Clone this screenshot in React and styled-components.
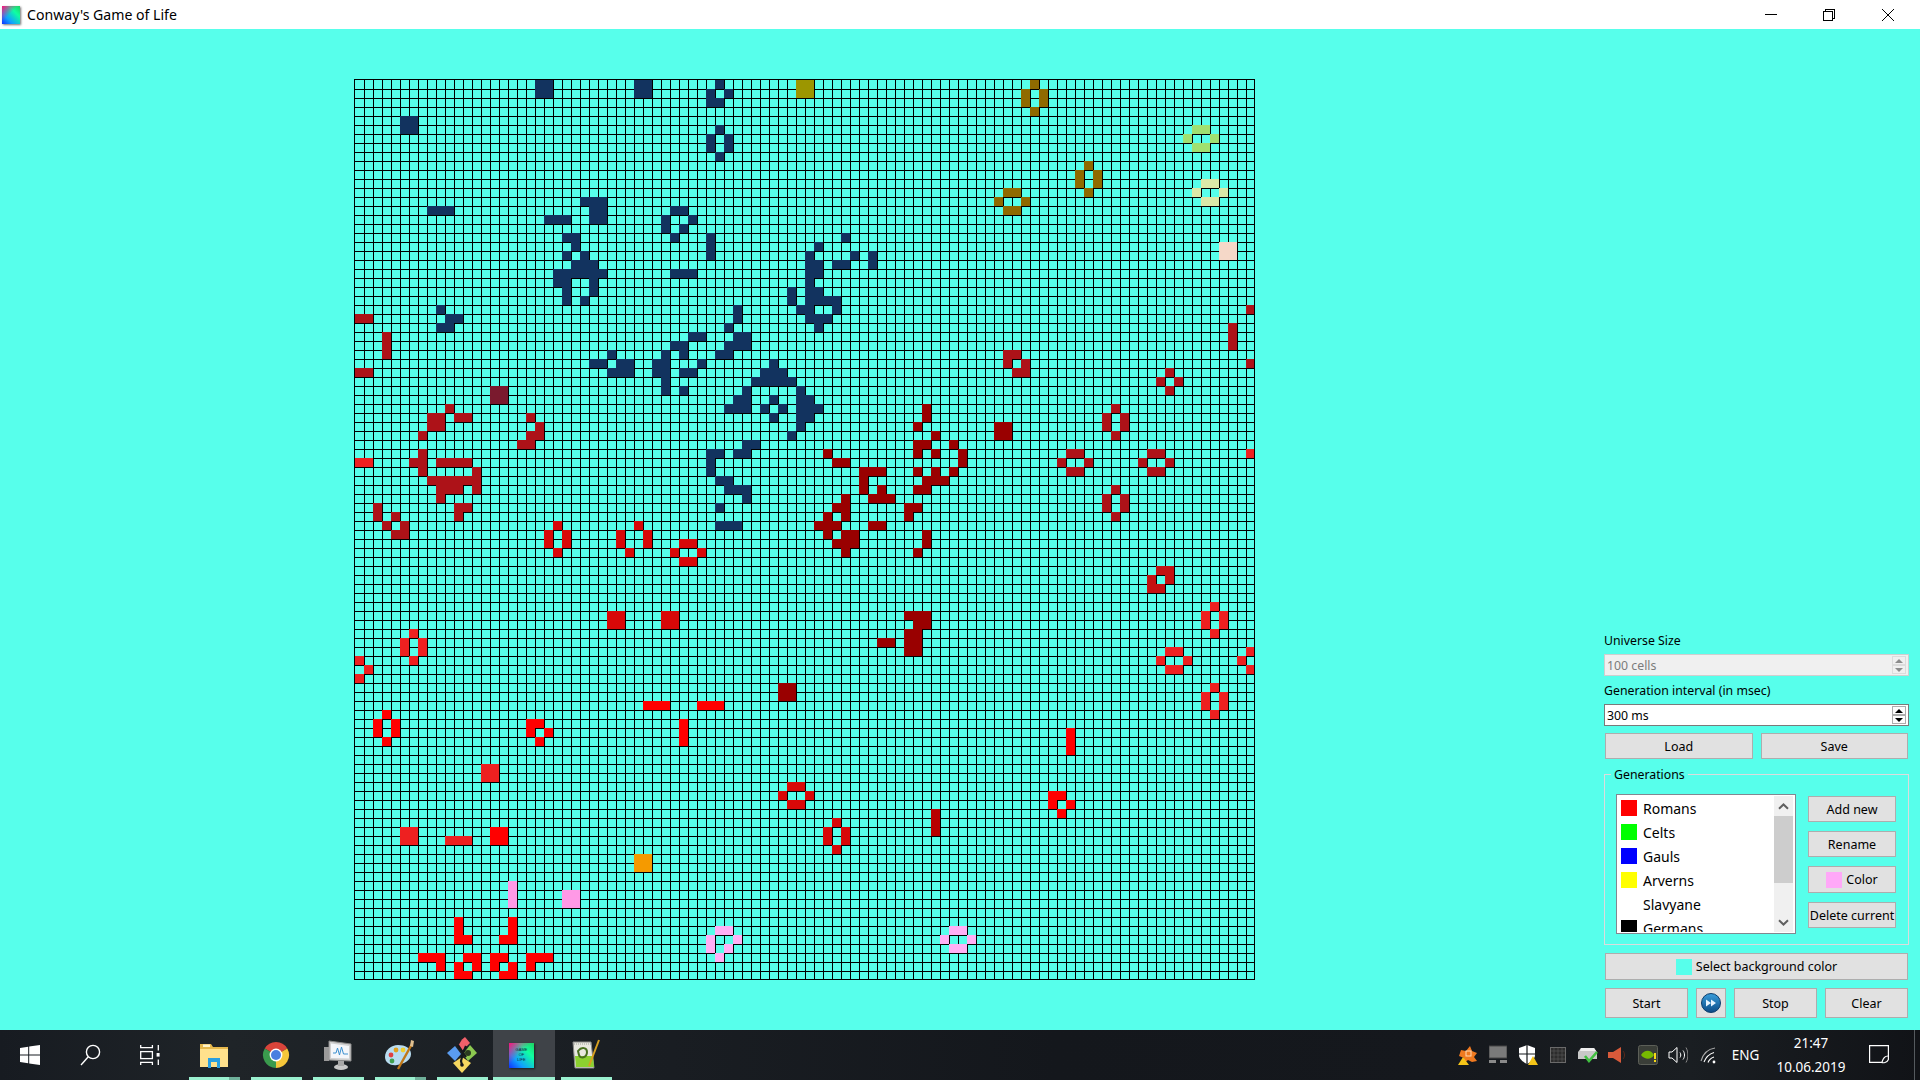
import React from 'react';
import styled, { createGlobalStyle } from 'styled-components';

const BG = '#57ffeb';

const GlobalStyle = createGlobalStyle`
  html, body {
    margin: 0;
    padding: 0;
    height: 100%;
    overflow: hidden;
    background: ${BG};
    font-family: "Noto Sans", "Open Sans", sans-serif;
    color: #000;
  }
  * { box-sizing: border-box; }
`;

const Window = styled.div`
  width: 1920px;
  height: 1080px;
  display: flex;
  flex-direction: column;
  background: ${BG};
`;

const TitleBar = styled.div`
  height: 29px;
  background: #fff;
  display: flex;
  align-items: center;
  padding: 0 3px 0 2px;
`;

const AppIcon = styled.div`
  flex: none;
  width: ${(p) => p.$size}px;
  height: ${(p) => p.$size}px;
  margin-right: ${(p) => p.$shift || 0}px;
  background:
    linear-gradient(135deg, #ff0f7a 0%, rgba(255, 15, 122, 0) 45%),
    linear-gradient(45deg, #1030ff 0%, #10a0ff 30%, #10ffa0 70%, #20d060 100%);
  box-shadow: 1px 1px 2px rgba(0, 0, 0, 0.55);
  color: #123;
  font-family: "Liberation Sans", sans-serif;
  font-size: 4px;
  line-height: 5px;
  padding-top: 4px;
  text-align: center;
  overflow: hidden;
`;

const TitleText = styled.div`
  margin-left: 7px;
  flex: 1;
  font-size: 14.1px;
`;

const WinButton = styled.div`
  width: 58.5px;
  height: 29px;
  display: flex;
  align-items: center;
  justify-content: center;
`;

const Main = styled.div`
  flex: 1;
  min-height: 0;
  display: flex;
  justify-content: space-between;
  padding: 50px 11px 12px 354px;
`;

const BoardSvg = styled.svg`
  display: block;
  flex: none;
`;

const Panel = styled.div`
  width: 305px;
  align-self: flex-end;
  display: flex;
  flex-direction: column;
  font-size: 12.3px;
`;

const Label = styled.div`
  height: 18px;
  line-height: 18px;
  margin-bottom: 4px;
`;

const Spin = styled.div`
  height: 22px;
  border: 1px solid ${(p) => (p.$disabled ? '#cfcfcf' : '#7a7a7a')};
  background: ${(p) => (p.$disabled ? '#f0f0f0' : '#fff')};
  color: ${(p) => (p.$disabled ? '#7b7b7b' : '#000')};
  display: flex;
  align-items: center;
  justify-content: space-between;
  padding: 1px 2px 1px 2px;
  margin-bottom: ${(p) => (p.$disabled ? '6px' : '7px')};
`;

const SpinButtons = styled.div`
  width: 14px;
  height: 18px;
  display: flex;
  flex-direction: column;
`;

const SpinButton = styled.div`
  flex: 1;
  background: ${(p) => (p.$disabled ? '#f0f0f0' : '#fdfdfd')};
  border: 1px solid ${(p) => (p.$disabled ? '#dcdcdc' : '#adadad')};
  display: flex;
  align-items: center;
  justify-content: center;
`;

const Arrow = styled.div`
  width: 0;
  height: 0;
  border-left: 4px solid transparent;
  border-right: 4px solid transparent;
  ${(p) => (p.$down ? 'border-top' : 'border-bottom')}: 4px solid ${(p) => (p.$disabled ? '#8c8c8c' : '#000')};
`;

const ButtonRow = styled.div`
  display: flex;
  gap: 8px;
  padding: 0 1px;
  margin-top: ${(p) => p.$top || 0}px;
`;

const Button = styled.div`
  flex: ${(p) => p.$flex || 'none'};
  width: ${(p) => (p.$w ? `${p.$w}px` : 'auto')};
  height: ${(p) => p.$h || 26}px;
  background: #e1e1e1;
  border: 1px solid #adadad;
  font-size: 12.5px;
  display: flex;
  align-items: center;
  justify-content: center;
  gap: ${(p) => p.$gap || 0}px;
`;

const Swatch = styled.span`
  display: block;
  flex: none;
  width: 16px;
  height: 16px;
  background: ${(p) => p.$color};
`;

const Group = styled.div`
  position: relative;
  height: 171px;
  margin-top: 15px;
  margin-bottom: 8px;
  border: 1px solid #dcdcdc;
  padding: 19px 11px 0;
  display: flex;
  gap: 12px;
`;

const GroupTitle = styled.div`
  position: absolute;
  left: 6px;
  top: -8px;
  padding: 0 3px;
  line-height: 16px;
  background: ${BG};
`;

const List = styled.div`
  width: 180px;
  height: 140px;
  border: 1px solid #828790;
  background: #fff;
  padding: 1px 2px 1px 0;
  display: flex;
  overflow: hidden;
`;

const ListItems = styled.div`
  flex: 1;
  overflow: hidden;
`;

const ListItem = styled.div`
  height: 24px;
  display: flex;
  align-items: center;
  gap: 6px;
  padding-left: 4px;
  font-size: 14px;
`;

const Scrollbar = styled.div`
  width: 19px;
  background: #f0f0f0;
  display: flex;
  flex-direction: column;
`;

const ScrollEnd = styled.div`
  height: 20px;
  display: flex;
  align-items: center;
  justify-content: center;
  flex: none;
`;

const ScrollThumb = styled.div`
  height: 67px;
  background: #cdcdcd;
`;

const ScrollRest = styled.div`
  flex: 1;
`;

const SideButtons = styled.div`
  width: 88px;
  margin-top: 2px;
  display: flex;
  flex-direction: column;
  gap: 9px;
`;

const Taskbar = styled.div`
  height: 50px;
  flex: none;
  display: flex;
  align-items: stretch;
  background: linear-gradient(90deg, #171b21 0%, #1f2428 12%, #191d22 35%, #14171c 55%, #15181d 75%, #1a1e22 88%, #111317 100%);
  color: #fff;
`;

const SystemSlot = styled.div`
  width: 60px;
  display: flex;
  align-items: center;
  justify-content: center;
`;

const Pinned = styled.div`
  display: flex;
  margin-left: 3px;
`;

const TaskSlot = styled.div`
  position: relative;
  width: 62px;
  display: flex;
  align-items: center;
  justify-content: center;
  background: ${(p) => (p.$active ? '#3f4348' : 'transparent')};

  &::after {
    content: '';
    position: absolute;
    bottom: 0;
    height: 3px;
    left: ${(p) => (p.$active ? 0 : 6)}px;
    right: ${(p) => (p.$active ? 0 : 5)}px;
    background: ${(p) =>
      p.$stacked
        ? 'linear-gradient(90deg, #9af0cf 0 79%, #6fb09a 79% 100%)'
        : '#9af0cf'};
  }
`;

const Spacer = styled.div`
  flex: 1;
`;

const TrayIcon = styled.div`
  width: 30px;
  display: flex;
  align-items: center;
  justify-content: center;
`;

const Lang = styled.div`
  width: 45px;
  display: flex;
  align-items: center;
  justify-content: center;
  font-size: 13.5px;
`;

const Clock = styled.div`
  width: 86px;
  display: flex;
  flex-direction: column;
  align-items: center;
  justify-content: center;
  gap: 5px;
  font-size: 13.5px;
  line-height: 19px;
`;

const Notify = styled.div`
  width: 50px;
  display: flex;
  align-items: center;
  justify-content: center;
`;

const ShowDesktop = styled.div`
  width: 16px;
  padding-left: 10px;

  &::before {
    content: '';
    display: block;
    width: 1px;
    height: 100%;
    background: #555a5e;
  }
`;

// board data: one entry per colour, "row:col,col-col" separated by spaces
const NAVY = `0:20-21,31-32,40 1:20-21,31-32,39,41 2:39-40 4:5-6 5:5-6,40 6:39,41 7:39,41 8:40
13:25-27 14:8-10,26-27,35-36 15:21-23,26-27,34,37 16:34,36 17:23-24,35,39,54 18:24,39,51
19:23,25,39,50,55,57 20:24-26,50-51,53-54,57 21:22-27,35-37,50-51 22:22-23,26,50 23:23,26,48,50-51
24:23,25,48,50-53 25:9,42,49-50,53 26:10-11,42,50-52 27:9-10,41,51 28:37-38,42-43 29:35-36,41-43
30:28,34,36,40-41 31:26-27,29-30,33-34,38,46 32:28-30,33-34,36-37,45-47 33:34,44-48 34:34,36,43,49
35:42-43,46,49-50 36:41-43,45,47,49-51 37:46,49-50 38:49 39:48 40:43-44 41:39-40,42-43 42:39 43:39
44:40-41 45:41-43 46:43 47:40 49:40-42`;

const cells = [
  ['#12335f', NAVY],
  ['#9c9600', '0:49-50 1:49-50'],
  ['#8f6a00', '0:75 1:74,76 2:74,76 3:75 9:81 10:80,82 11:80,82 12:81,72-73 13:71,74 14:72-73'],
  ['#a0e070', '5:93-94 6:92,95 7:93-94'],
  ['#dbe8a8', '11:94-95 12:93,96 13:94-95'],
  ['#f5d8c8', '18:96-97 19:96-97'],
  ['#7a1a2e', '34:15-16 35:15-16'],
  ['#ad1218', `25:99 26:0-1 27:97 28:3,97 29:3,97 30:3,72-73 31:72,74,99 32:0-1,73-74,90 33:89,91 34:90
    36:10,84 37:8-9,11-12,19,83,85 38:8-9,20,83,85 39:7,19-20,84 40:18-19 41:7,79-80,88-89
    42:6-7,9-12,78,81,87,90 43:7,13,79-80,88-89 44:8-13 45:9-11,13,84 46:9,83,85 47:2,11-12,83,85
    48:2,4,11,84 49:3,5 50:4-5`],
  ['#c41212', '54:89-90 55:88,90 56:88-89'],
  ['#990000', `36:63 37:63 38:62,71-72 39:64,71-72 40:62-63,66 41:52,62,64,67 42:53-54,67 43:56-58,62,64,66
    44:56,63-65 45:56,58,62-63 46:54,57-59 47:53-54,61-62 48:52,54,61 49:51-53,57-58 50:52,54-55,63
    51:53-55,63 52:54,62 59:61-63 60:62-63 61:61-62 62:58-59,61-62 63:61-62 67:47-48 68:47-48`],
  ['#b80000', '81:64 82:64 83:64'],
  ['#d80808', '49:22,31 50:21,23,29,32 51:21,23,29,32,36-37 52:22,30,35,38 53:36-37 78:48-49 79:47,50 80:48-49 82:53 83:52,54 84:52,54 85:53 59:28-29,34-35 60:28-29,34-35'],
  ['#ee2020', `41:99 42:0-1 58:95 59:94,96 60:94,96 61:6,95 62:5,7 63:5,7,90-91,99 64:0,6,89,92,98 65:1,90-91,99 66:0
    67:95 68:94,96 69:94,96 70:95 76:14-15 77:14-15 83:5-6 84:5-6,10-12`],
  ['#ff0000', `69:32-34,38-40 70:3 71:2,4,19-20,36 72:2,4,19,21,36,79 73:3,20,36,79 74:79 79:77-78 80:77,79 81:78
    83:15-16 84:15-16 93:11,17 94:11,17 95:11-12,16-17 97:7-9,12-13,15-16,19-21 98:9,11,13,15,17,19 99:11-12,16-17`],
  ['#f59a00', '86:31-32 87:31-32'],
  ['#ff99e6', '89:17 90:17,23-24 91:17,23-24'],
  ['#ffb0f5', '94:40-41,66-67 95:39,42,65,68 96:39,41,66-67 97:40'],
];

const parseCells = (spec) => {
  const out = [];
  spec.trim().split(/\s+/).forEach((entry) => {
    const [row, cols] = entry.split(':');
    cols.split(',').forEach((part) => {
      const [a, b] = part.split('-').map(Number);
      for (let c = a; c <= (b === undefined ? a : b); c++) out.push([Number(row), c]);
    });
  });
  return out;
};

const Board = () => {
  let lines = '';
  for (let i = 0; i < 99; i++) {
    const p = 10.5 + 9 * i;
    lines += `M${p} 0V900M0 ${p}H900`;
  }
  return (
    <BoardSvg width="901" height="901" shapeRendering="crispEdges">
      <path d={lines} stroke="#000" strokeWidth="1" fill="none" />
      {cells.map(([color, spec]) => (
        <g key={color} fill={color}>
          {parseCells(spec).map(([r, c]) => (
            <rect key={`${r}-${c}`} x={1 + 9 * c} y={1 + 9 * r} width="9" height="9" />
          ))}
        </g>
      ))}
      <rect x=".5" y=".5" width="900" height="900" stroke="#000" strokeWidth="1" fill="none" />
    </BoardSvg>
  );
};

const generations = [
  ['Romans', '#ff0000'],
  ['Celts', '#00ff00'],
  ['Gauls', '#0000ff'],
  ['Arverns', '#ffff00'],
  ['Slavyane', '#ffffff'],
  ['Germans', '#000000'],
];

const SpinBox = ({ value, disabled }) => (
  <Spin $disabled={disabled}>
    <span>{value}</span>
    <SpinButtons>
      <SpinButton $disabled={disabled}><Arrow $disabled={disabled} /></SpinButton>
      <SpinButton $disabled={disabled}><Arrow $disabled={disabled} $down /></SpinButton>
    </SpinButtons>
  </Spin>
);

const Chevron = ({ down }) => (
  <svg width="11" height="7" viewBox="0 0 11 7">
    <path d={down ? 'M1 1.2L5.5 5.5L10 1.2' : 'M1 5.8L5.5 1.5L10 5.8'} fill="none" stroke="#606060" strokeWidth="2" />
  </svg>
);

const FastForward = () => (
  <svg width="20" height="20" viewBox="0 0 20 20">
    <defs>
      <linearGradient id="ff" x1="0" y1="0" x2="0" y2="1">
        <stop offset="0" stopColor="#3a9fdc" />
        <stop offset="1" stopColor="#0b4a86" />
      </linearGradient>
    </defs>
    <circle cx="10" cy="10" r="9.5" fill="url(#ff)" stroke="#0c3d6c" strokeWidth="1" />
    <path d="M5 6.5L10 10L5 13.5ZM10 6.5L15 10L10 13.5Z" fill="#e8f4ff" />
  </svg>
);

const WindowsLogo = () => (
  <svg width="20" height="20" viewBox="0 0 20 20" fill="#fff">
    <path d="M0 2.9L8.2 1.7V9.5H0ZM9.2 1.6L20 0V9.5H9.2ZM0 10.5H8.2V18.3L0 17.1ZM9.2 10.5H20V20L9.2 18.4Z" />
  </svg>
);

const SearchIcon = () => (
  <svg width="21" height="22" viewBox="0 0 21 22" fill="none" stroke="#fff" strokeWidth="1.4">
    <circle cx="13" cy="8" r="6.6" />
    <path d="M8.3 12.8L1 21" />
  </svg>
);

const TaskViewIcon = () => (
  <svg width="20" height="20" viewBox="0 0 20 20" fill="none" stroke="#fff" strokeWidth="1.3">
    <path d="M.7 0V2.6H12.4V0M.7 20V17.4H12.4V20" />
    <rect x=".7" y="6.6" width="11.7" height="7" />
    <path d="M18.3 0V5.6M18.3 14.4V20" />
    <rect x="16.6" y="8" width="3" height="3.6" fill="#fff" stroke="none" />
  </svg>
);

const ExplorerIcon = () => (
  <svg width="28" height="28" viewBox="0 0 28 28">
    <path d="M0 3H11L13 6H28V26H0Z" fill="#e6b84c" />
    <rect x="0" y="8" width="28" height="18" fill="#ffe18c" />
    <rect x="3" y="3.5" width="7" height="2.5" fill="#fff4c8" />
    <path d="M8 27V17H20V27H17V21H11V27Z" fill="#2a9fe0" />
  </svg>
);

const ChromeIcon = () => (
  <svg width="28" height="28" viewBox="0 0 28 28">
    <path d="M2.74 7.5A13 13 0 0 1 25.26 7.5L14 14Z" fill="#d9443a" />
    <path d="M25.26 7.5A13 13 0 0 1 14 27L14 14Z" fill="#f5c63a" />
    <path d="M14 27A13 13 0 0 1 2.74 7.5L14 14Z" fill="#3a9a4d" />
    <circle cx="14" cy="14" r="6.4" fill="#fff" />
    <circle cx="14" cy="14" r="5" fill="#4a7fe0" />
  </svg>
);

const MonitorIcon = () => (
  <svg width="28" height="32" viewBox="0 0 28 32">
    <path d="M5 2L27 5V22L5 21Z" fill="#cfcfcf" stroke="#8a8a8a" />
    <path d="M7 4.5L25 7V19.5L7 19Z" fill="#f4f6fa" />
    <path d="M9 14H12L13.5 9L15.5 16L17.5 8L19.5 15H24" fill="none" stroke="#3a8fd0" strokeWidth="1" />
    <rect x="0" y="8" width="5" height="14" fill="#9a9a9a" />
    <ellipse cx="17" cy="28" rx="7" ry="3" fill="#c8c8c8" />
    <rect x="14" y="22" width="6" height="5" fill="#a8a8a8" />
  </svg>
);

const PaletteIcon = () => (
  <svg width="30" height="32" viewBox="0 0 30 32">
    <path d="M13 6C6 6 0 11 0 18C0 24 6 27 12 26C18 25 26 22 26 15C26 9 20 6 13 6Z" fill="#b8dcf0" />
    <circle cx="6" cy="16" r="2.4" fill="#e04040" />
    <circle cx="11" cy="11" r="2.4" fill="#e0a020" />
    <circle cx="18" cy="11" r="2.4" fill="#f0d030" />
    <circle cx="7" cy="22" r="2.4" fill="#40a050" />
    <path d="M13 30L27 5" stroke="#c07818" strokeWidth="2.4" />
    <path d="M25 7L26 1L29 2L28 8Z" fill="#e0c090" />
  </svg>
);

const DiamondIcon = () => (
  <svg width="30" height="36" viewBox="0 0 30 36">
    <path d="M15 2.5L18 0L23 6L15 14L11 9Z" fill="#f0606a" />
    <path d="M23 8L30 16L21 24L16 17Z" fill="#8cc850" />
    <path d="M15 20L24 26L15 36L6 26Z" fill="#f6d860" />
    <path d="M8 9L14 17L8 24L0 16Z" fill="#5a9cf0" />
    <path d="M11 8L19 20M19 9L16 16L14 24L15 28" stroke="#15181c" strokeWidth="2.2" fill="none" />
    <circle cx="21" cy="16" r="3" fill="#2a3a20" />
    <circle cx="15" cy="28" r="1.8" fill="#15181c" />
  </svg>
);

const NotepadIcon = () => (
  <svg width="28" height="34" viewBox="0 0 28 34">
    <path d="M1 4H19L22 30H3Z" fill="#e8e8e0" stroke="#8a8a88" />
    <path d="M2 6H19" stroke="#a0a09a" strokeDasharray="1 1" />
    <path d="M3 18H21L22 29H4Z" fill="#8cd030" />
    <path d="M6 13C10 8 15 10 15 14C15 20 8 21 7 17Z" fill="none" stroke="#487020" strokeWidth="2" />
    <path d="M17 28L27 2" stroke="#d8a020" strokeWidth="2" />
  </svg>
);

const trayIcons = [
  <svg key="a" width="20" height="22" viewBox="0 0 20 22">
    <path d="M3 6L8 7L12 2L14 7L19 9L16 13L19 17L14 18L10 16L6 19L6 14L1 12Z" fill="#f07a20" />
    <rect x="8" y="7" width="5" height="5" fill="none" stroke="#ffd8b0" />
    <path d="M5 13L11 21H0Z" fill="#f5c518" />
  </svg>,
  <svg key="b" width="18" height="20" viewBox="0 0 18 20">
    <rect x="0" y="1" width="18" height="12" fill="#7a7a7a" stroke="#444" />
    <rect x="0" y="15" width="7" height="3" fill="#8a8a8a" />
    <rect x="11" y="15" width="7" height="3" fill="#8a8a8a" />
  </svg>,
  <svg key="c" width="20" height="22" viewBox="0 0 20 22">
    <path d="M9 1L17 4V11C17 15 13 18 9 20C5 18 1 15 1 11V4Z" fill="#fff" />
    <path d="M9 1V20M1 10H17" stroke="#15181c" strokeWidth="1.2" />
    <path d="M15 12L20 21H10Z" fill="#f5c518" />
  </svg>,
  <svg key="d" width="16" height="16" viewBox="0 0 16 16">
    <rect x=".5" y=".5" width="15" height="15" fill="#2c2c2c" stroke="#6a6a6a" />
    <path d="M4 1V15M8 1V15M12 1V15M1 4H15M1 8H15M1 12H15" stroke="#555" strokeWidth=".7" />
  </svg>,
  <svg key="e" width="20" height="16" viewBox="0 0 20 16">
    <path d="M3 1H16L19 5V12H0V5Z" fill="#c8c8c8" />
    <path d="M3 1H16L18 4H2Z" fill="#eee" />
    <path d="M7 9L11 14L19 5" fill="none" stroke="#40c040" strokeWidth="2.6" />
  </svg>,
  <svg key="f" width="20" height="18" viewBox="0 0 20 18">
    <path d="M0 6H5L13 1V17L5 12H0Z" fill="#d85a3a" />
    <path d="M15 5C17 7 17 11 15 13" stroke="#5a2a1a" fill="none" />
  </svg>,
  <svg key="g" width="20" height="20" viewBox="0 0 20 20">
    <rect x=".5" y=".5" width="19" height="19" rx="2" fill="#3a3e38" stroke="#5c5f58" />
    <path d="M3 10C7 4 13 5 16 10C13 15 7 15 3 10Z" fill="#76b900" />
    <rect x="16" y="8" width="2" height="6" fill="#f5d818" />
    <rect x="16" y="15" width="2" height="2" fill="#f5d818" />
  </svg>,
  <svg key="h" width="20" height="18" viewBox="0 0 20 18" fill="none" stroke="#fff" strokeWidth="1">
    <path d="M1 6H4L9 1.5V16.5L4 12H1Z" />
    <path d="M12 6.5C13 8 13 10 12 11.5M15 4.5C17 7 17 11 15 13.5" />
    <path d="M18 1.5C20.5 6 20.5 12 18 16.5" stroke="#888" />
  </svg>,
  <svg key="i" width="20" height="18" viewBox="0 0 20 18" fill="none" stroke="#fff" strokeWidth="1.1">
    <path d="M3 15C5 8 10 3 17 2" stroke="#aaa" />
    <path d="M6 16C8 11 11 8 16 6.5" />
    <path d="M10 16.5C11 14 13 12 16 11" />
    <circle cx="16" cy="16" r="1.4" fill="#fff" stroke="none" />
  </svg>,
];

const App = () => (
  <Window>
    <GlobalStyle />
    <TitleBar>
      <AppIcon $size={18} />
      <TitleText>Conway's Game of Life</TitleText>
      <WinButton>
        <svg width="12" height="1"><rect width="12" height="1" /></svg>
      </WinButton>
      <WinButton>
        <svg width="12" height="12" viewBox="0 0 12 12" fill="none" stroke="#000" shapeRendering="crispEdges">
          <rect x=".5" y="2.5" width="9" height="9" />
          <path d="M2.5 2.5V.5H11.5V9.5H9.5" />
        </svg>
      </WinButton>
      <WinButton>
        <svg width="12" height="12" viewBox="0 0 12 12" stroke="#000" strokeWidth="1">
          <path d="M0 0L12 12M12 0L0 12" />
        </svg>
      </WinButton>
    </TitleBar>

    <Main>
      <Board />
      <Panel>
        <Label>Universe Size</Label>
        <SpinBox value="100 cells" disabled />
        <Label>Generation interval (in msec)</Label>
        <SpinBox value="300 ms" />
        <ButtonRow>
          <Button $flex={1}>Load</Button>
          <Button $flex={1}>Save</Button>
        </ButtonRow>
        <Group>
          <GroupTitle>Generations</GroupTitle>
          <List>
            <ListItems>
              {generations.map(([name, color]) => (
                <ListItem key={name}>
                  <Swatch $color={color} />
                  {name}
                </ListItem>
              ))}
            </ListItems>
            <Scrollbar>
              <ScrollEnd><Chevron /></ScrollEnd>
              <ScrollThumb />
              <ScrollRest />
              <ScrollEnd><Chevron down /></ScrollEnd>
            </Scrollbar>
          </List>
          <SideButtons>
            <Button>Add new</Button>
            <Button>Rename</Button>
            <Button $h={27} $gap={4}><Swatch $color="#ffa8f8" />Color</Button>
            <Button>Delete current</Button>
          </SideButtons>
        </Group>
        <ButtonRow>
          <Button $flex={1} $h={27} $gap={4}><Swatch $color={BG} />Select background color</Button>
        </ButtonRow>
        <ButtonRow $top={8}>
          <Button $w={83} $h={30}>Start</Button>
          <Button $w={30} $h={30}><FastForward /></Button>
          <Button $w={83} $h={30}>Stop</Button>
          <Button $w={83} $h={30}>Clear</Button>
        </ButtonRow>
      </Panel>
    </Main>

    <Taskbar>
      <SystemSlot><WindowsLogo /></SystemSlot>
      <SystemSlot><SearchIcon /></SystemSlot>
      <SystemSlot><TaskViewIcon /></SystemSlot>
      <Pinned>
        <TaskSlot $stacked><ExplorerIcon /></TaskSlot>
        <TaskSlot><ChromeIcon /></TaskSlot>
        <TaskSlot><MonitorIcon /></TaskSlot>
        <TaskSlot $stacked><PaletteIcon /></TaskSlot>
        <TaskSlot><DiamondIcon /></TaskSlot>
        <TaskSlot $active><AppIcon $size={25} $shift={5}>GAME<br />OF<br />LIFE</AppIcon></TaskSlot>
        <TaskSlot><NotepadIcon /></TaskSlot>
      </Pinned>
      <Spacer />
      {trayIcons.map((icon) => (
        <TrayIcon key={icon.key}>{icon}</TrayIcon>
      ))}
      <Lang>ENG</Lang>
      <Clock>
        <span>21:47</span>
        <span>10.06.2019</span>
      </Clock>
      <Notify>
        <svg width="20" height="20" viewBox="0 0 20 20" fill="none" stroke="#fff" strokeWidth="1.2">
          <path d="M.6 .6H19.4V14.5C18 18 14 18 12.5 17.4H.6Z" />
          <path d="M19 11C16 11 14 13.5 13 17" />
        </svg>
      </Notify>
      <ShowDesktop />
    </Taskbar>
  </Window>
);

export default App;
